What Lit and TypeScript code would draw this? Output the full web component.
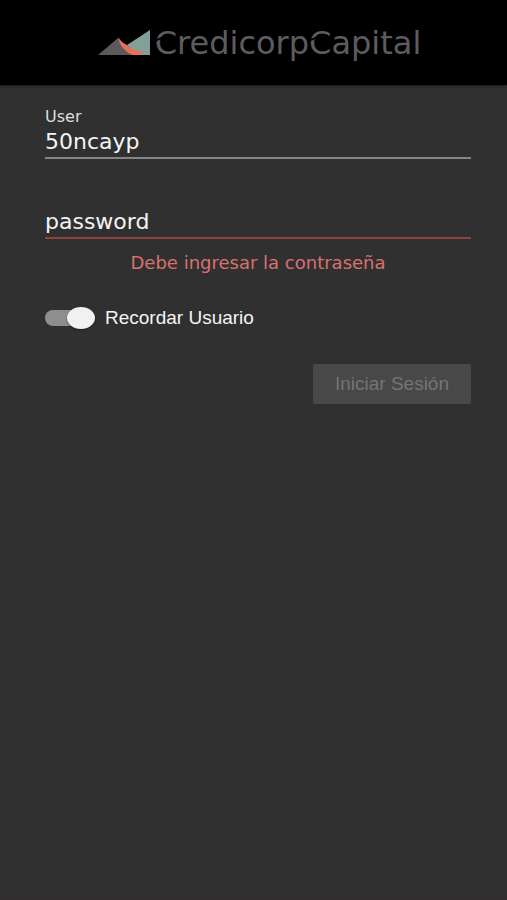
import { LitElement, html, css } from "lit";
import { customElement, state } from "lit/decorators.js";

@customElement("brand-logo")
class BrandLogo extends LitElement {
  static styles = css`
    :host {
      display: flex;
      align-items: center;
      gap: 4px;
    }
    .mark {
      width: 53px;
      height: 26px;
      flex: none;
    }
    .name {
      position: relative;
      font: 32px/36px "DejaVu Sans", sans-serif;
      color: #5c5c5e;
    }
    .initial {
      position: relative;
    }
    .initial::after {
      content: "";
      position: absolute;
      left: 0;
      top: 14px;
      width: 8px;
      height: 2px;
      background: #000;
      transform: rotate(-25deg);
    }
  `;

  render() {
    return html`
      <svg class="mark" viewBox="0 0 53 26" aria-hidden="true">
        <path d="M0 25 L20 8 L34 25 Z" fill="#5b595c" />
        <path d="M29 15 L52 0 V25 H40 Z" fill="#82a098" />
        <path d="M20 7 Q24 13 29 15 Q34 20 45 22 L43 25 H34 Q22 19 20 7 Z" fill="#e5705c" />
      </svg>
      <span class="name"><span class="initial">C</span>redicorp<span class="initial">C</span>apital</span>
    `;
  }
}

@customElement("app-root")
class AppRoot extends LitElement {
  @state() private remember = true;

  static styles = css`
    :host {
      display: flex;
      flex-direction: column;
      min-height: 100vh;
      box-sizing: border-box;
      background: #303030;
      border-bottom: 1px solid #342d30;
      color: #f4f4f4;
      font-family: "DejaVu Sans", sans-serif;
    }
    header {
      display: flex;
      justify-content: center;
      padding: 25px 0 24px 12px;
      background: #000;
      box-shadow: 0 1px 3px #0008;
    }
    form {
      display: flex;
      flex-direction: column;
      padding: 22px 36px 22px 45px;
    }
    .label {
      font-size: 16px;
      line-height: 20px;
      color: #dedede;
    }
    .field {
      box-sizing: border-box;
      width: 100%;
      height: 32px;
      margin: 0;
      padding: 0 0 2px;
      border: 0;
      border-bottom: 2px solid #858585;
      border-radius: 0;
      outline: 0;
      background: none;
      color: #f4f4f4;
      font: 22px "DejaVu Sans", sans-serif;
    }
    .field::placeholder {
      color: #f4f4f4;
      opacity: 1;
    }
    .invalid {
      margin-top: 48px;
      border-bottom-color: #8b443e;
    }
    .error {
      margin: 12px 0 0;
      text-align: center;
      font-size: 18px;
      line-height: 24px;
      color: #d9706f;
    }
    .remember {
      display: flex;
      align-items: center;
      gap: 10px;
      margin-top: 32px;
      font: 19px/22px "Liberation Sans", sans-serif;
    }
    .switch {
      appearance: none;
      display: flex;
      align-items: center;
      position: relative;
      width: 50px;
      height: 22px;
      margin: 0;
    }
    .switch::after {
      content: "";
      position: absolute;
      left: 0;
      width: 45px;
      height: 16px;
      border-radius: 8px;
      background: #8e8e8e;
    }
    .switch::before {
      content: "";
      z-index: 1;
      width: 28px;
      height: 22px;
      border-radius: 50%;
      background: #f1f1f1;
      box-shadow: 0 1px 2px #0006;
    }
    .switch:checked {
      justify-content: flex-end;
    }
    .submit {
      align-self: flex-end;
      height: 40px;
      margin-top: 35px;
      padding: 0 22px;
      border: 0;
      border-radius: 2px;
      background: #484848;
      color: #747474;
      font: 19px "Liberation Sans", sans-serif;
    }
  `;

  private toggle(e: Event) {
    this.remember = (e.target as HTMLInputElement).checked;
  }

  render() {
    return html`
      <header><brand-logo></brand-logo></header>
      <form>
        <label class="label" for="user">User</label>
        <input class="field" id="user" type="text" .value=${"50ncayp"} />
        <input class="field invalid" type="password" placeholder="password"
          aria-label="password" aria-invalid="true" aria-describedby="error" />
        <p class="error" id="error">Debe ingresar la contraseña</p>
        <label class="remember">
          <input class="switch" type="checkbox" role="switch" .checked=${this.remember} @change=${this.toggle} />
          Recordar Usuario
        </label>
        <button class="submit" type="submit" disabled>Iniciar Sesión</button>
      </form>
    `;
  }
}
